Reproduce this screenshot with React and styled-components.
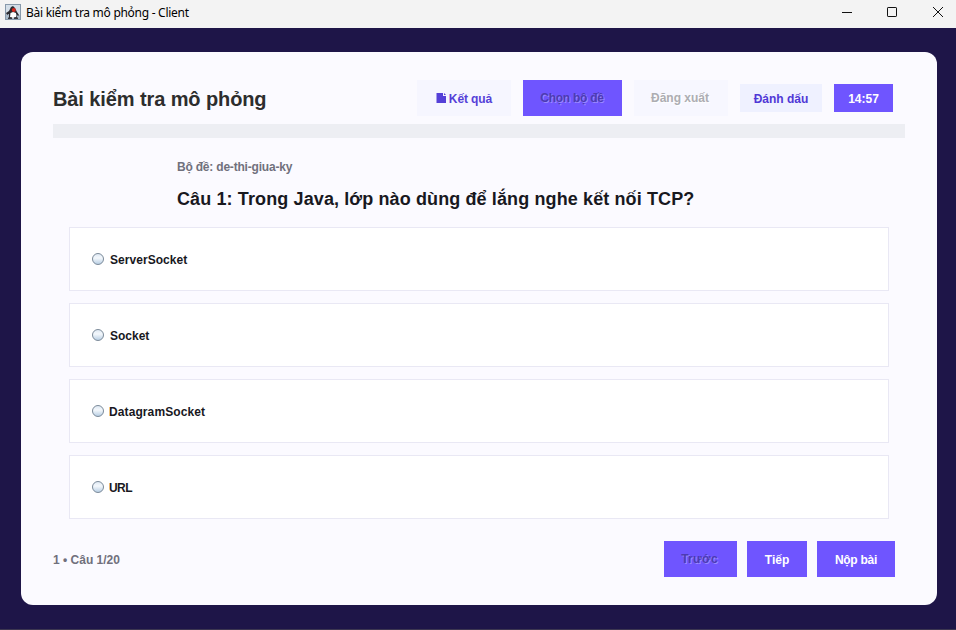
import React from 'react';
import styled, { createGlobalStyle } from 'styled-components';

const GlobalStyle = createGlobalStyle`
  * { box-sizing: border-box; }
  body { margin: 0; font-family: "Liberation Sans", Arial, sans-serif; }
`;

const Window = styled.div`
  width: 956px;
  height: 630px;
  display: flex;
  flex-direction: column;
  background: #1e1548;
  border-bottom: 1px solid #3c3650;
  overflow: hidden;
`;

const TitleBar = styled.header`
  height: 28px;
  flex: none;
  display: flex;
  align-items: center;
  padding: 0 4px 0 5px;
  background: #f3f3f3;
`;

const AppIcon = styled.svg`
  width: 16px;
  height: 16px;
  margin: 0 5px 4px 0;
`;

const WindowTitle = styled.span`
  flex: 1;
  font: 12px/16px "Noto Sans", sans-serif;
  letter-spacing: ${(p) => p.$spacing}px;
  color: #000;
  margin-bottom: 2px;
  white-space: nowrap;
`;

const WindowControls = styled.div`
  display: flex;
  gap: 34px;
  margin: 0 8px 4px 0;
`;

const ControlIcon = styled.svg`
  width: 12px;
  height: 12px;
  display: block;
  fill: none;
  stroke: #111;
`;

const Card = styled.main`
  width: 916px;
  height: 553px;
  margin: 24px 0 0 21px;
  padding: 28px 32px;
  border-radius: 12px;
  background: #fbfaff;
  display: flex;
  flex-direction: column;
`;

const Header = styled.div`
  height: 36px;
  display: flex;
  align-items: center;
  justify-content: space-between;
  padding-right: 12px;
`;

const Title = styled.h1`
  margin: 2px 0 0;
  font-size: 20px;
  line-height: 24px;
  letter-spacing: ${(p) => p.$spacing}px;
  color: #2d2d2d;
  white-space: nowrap;
`;

const Actions = styled.div`
  display: flex;
  align-items: center;
  gap: ${(p) => p.$gap}px;
`;

const tones = {
  primary: 'background: #6f55ff; color: #fff;',
  primaryDisabled: 'background: #6f55ff; color: #4d3bb2; text-shadow: 1px 1px 0 #9a88ff;',
  pale: 'background: #f6f6ff; color: #5540d8;',
  paleDisabled: 'background: #f7f7ff; color: #adadb2; text-shadow: 1px 1px 0 #fff;',
  mark: 'background: #eff1ff; color: #5038d6;',
};

const Button = styled.button`
  width: ${(p) => p.$width}px;
  height: ${(p) => p.$height || 36}px;
  padding: ${(p) => p.$top ?? 1}px ${(p) => p.$right || 0}px 0 0;
  border: 0;
  display: flex;
  align-items: center;
  justify-content: center;
  gap: 3px;
  font: bold 12px/14px "Liberation Sans", Arial, sans-serif;
  letter-spacing: ${(p) => p.$spacing || 0}px;
  white-space: nowrap;
  ${(p) => tones[p.$tone]}
`;

const PageIcon = styled.svg`
  width: 10px;
  height: 10px;
  margin-bottom: 2px;
  fill: currentColor;
`;

const Progress = styled.div`
  width: 852px;
  height: 14px;
  margin-top: 8px;
  background: #edeef3;
`;

const Question = styled.section`
  height: 89px;
  padding: 22px 0 0 124px;
`;

const SetName = styled.p`
  margin: 0;
  font: bold 12px/14px "Liberation Sans", Arial, sans-serif;
  letter-spacing: ${(p) => p.$spacing}px;
  color: #70707c;
`;

const Position = styled(SetName)`
  margin-top: 2px;
`;

const Prompt = styled.h2`
  margin: 14px 0 0;
  font-size: 18px;
  line-height: 22px;
  letter-spacing: ${(p) => p.$spacing}px;
  color: #18181e;
  white-space: nowrap;
`;

const Options = styled.div`
  width: 820px;
  margin-left: 16px;
  display: flex;
  flex-direction: column;
  gap: 12px;
`;

const Option = styled.label`
  height: 64px;
  display: flex;
  align-items: center;
  padding-left: 22px;
  border: 1px solid #e9e8f4;
  background: #fff;
  font: bold 12px/14px "Liberation Sans", Arial, sans-serif;
  letter-spacing: ${(p) => p.$spacing}px;
  color: #18181e;
`;

const Radio = styled.span`
  width: 12px;
  height: 12px;
  margin-right: ${(p) => p.$gap}px;
  border: 1px solid #7b8a99;
  border-radius: 50%;
  background: linear-gradient(#dfe9f4, #f4f8fc 40%, #b9cfe4);
`;

const OptionText = styled.span`
  margin-top: 1px;
`;

const Footer = styled.footer`
  height: 36px;
  margin-top: 22px;
  padding-right: 10px;
  display: flex;
  align-items: center;
  justify-content: space-between;
`;

const options = [
  { text: 'ServerSocket', spacing: 0.05, gap: 6 },
  { text: 'Socket', spacing: 0, gap: 6 },
  { text: 'DatagramSocket', spacing: 0.1, gap: 5 },
  { text: 'URL', spacing: -0.6, gap: 5 },
];

export default function App() {
  return (
    <>
      <GlobalStyle />
      <Window>
        <TitleBar>
          <AppIcon viewBox="0 0 16 16">
            <rect width="16" height="16" fill="#8799ab" />
            <rect x="1" y="1" width="14" height="14" fill="#d3dee8" />
            <rect x="1" y="11" width="14" height="4" fill="#a9bac9" />
            <path d="M6 3 L8 2 L10 4 L12 8 L14 11 L13 12 L11 10 L12 14 H4 L4 10 L2 11 L1 9 L4 7Z" fill="#2b2b30" />
            <path d="M5.5 9 L8 8 L11 9 L11 13 L8 14 L5 13Z" fill="#fff" />
            <circle cx="8.8" cy="6" r="2" fill="#d9281f" />
            <path d="M3 13.5H7V15H3Z M9 13.5H13V15H9Z" fill="#3a3a40" />
          </AppIcon>
          <WindowTitle $spacing={-0.28}>Bài kiểm tra mô phỏng - Client</WindowTitle>
          <WindowControls>
            <ControlIcon viewBox="0 0 12 12"><path d="M2 6.5H12" /></ControlIcon>
            <ControlIcon viewBox="0 0 12 12"><rect x="1.5" y="1.5" width="9" height="9" rx="0.6" /></ControlIcon>
            <ControlIcon viewBox="0 0 12 12"><path d="M1 1L11 11M11 1L1 11" /></ControlIcon>
          </WindowControls>
        </TitleBar>
        <Card>
          <Header>
            <Title $spacing={-0.1}>Bài kiểm tra mô phỏng</Title>
            <Actions $gap={12}>
              <Button $tone="pale" $width={94} $spacing={-0.1}>
                <PageIcon viewBox="0 0 10 10"><path d="M0.5 0H7V3H10V10H0.5Z M8 0L10 2H8Z" /></PageIcon>
                Kết quả
              </Button>
              <Button $tone="primaryDisabled" $width={99} $top={0} $right={1} $spacing={-0.25}>Chọn bộ đề</Button>
              <Button $tone="paleDisabled" $width={94} $top={0} $right={2}>Đăng xuất</Button>
              <Button $tone="mark" $width={82} $height={28}>Đánh dấu</Button>
              <Button $tone="primary" $width={59} $height={28}>14:57</Button>
            </Actions>
          </Header>
          <Progress />
          <Question>
            <SetName $spacing={-0.2}>Bộ đề: de-thi-giua-ky</SetName>
            <Prompt $spacing={0.115}>Câu 1: Trong Java, lớp nào dùng để lắng nghe kết nối TCP?</Prompt>
          </Question>
          <Options>
            {options.map((o) => (
              <Option key={o.text} $spacing={o.spacing}>
                <Radio $gap={o.gap} />
                <OptionText>{o.text}</OptionText>
              </Option>
            ))}
          </Options>
          <Footer>
            <Position as="span" $spacing={0}>1 • Câu 1/20</Position>
            <Actions $gap={10}>
              <Button $tone="primaryDisabled" $width={73} $top={0} $right={2} $spacing={0.3}>Trước</Button>
              <Button $tone="primary" $width={60}>Tiếp</Button>
              <Button $tone="primary" $width={78} $spacing={-0.25}>Nộp bài</Button>
            </Actions>
          </Footer>
        </Card>
      </Window>
    </>
  );
}
